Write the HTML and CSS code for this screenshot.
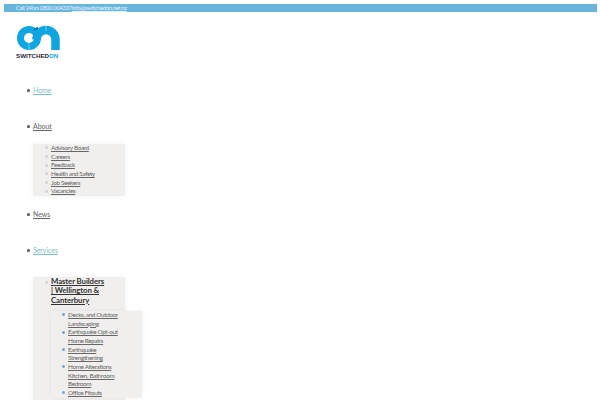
FILE: index.html
```html
<!DOCTYPE html>
<html lang="en">
<head>
<meta charset="utf-8">
<title>Switched On</title>
<link rel="stylesheet" href="styles.css">
</head>
<body>
<div class="topbar">Call 24hrs 0800 004337<a href="#">info@switchedon.net.nz</a></div>
<a class="logo" href="#">
<svg width="46" height="26" viewBox="0 0 46 26"><circle cx="13" cy="13" r="8.5" fill="none" stroke="#0ea5e0" stroke-width="7"/><path d="M20.5 14.5A9.5 9.5 0 0 1 39.5 14.5V25" fill="none" stroke="#0ea5e0" stroke-width="8.5"/><path d="M18 5L22 2.5" stroke="#0a6f9c" stroke-width="1.6"/><path d="M13 18.5V25M30 0V6" stroke="#bfe6f7" stroke-width=".6"/></svg>
<span class="logo-text">SWITCHED<span class="logo-on">ON</span></span>
</a>
<ul class="menu">
<li class="item"><a class="active" href="#">Home</a></li>
<li class="item has-panel"><a href="#">About</a>
<ul class="panel">
<li><a href="#">Advisory Board</a></li>
<li><a href="#">Careers</a></li>
<li><a href="#">Feedback</a></li>
<li><a href="#">Health and Safety</a></li>
<li><a href="#">Job Seekers</a></li>
<li><a href="#">Vacancies</a></li>
</ul></li>
<li class="item"><a href="#">News</a></li>
<li class="item has-panel"><a class="active" href="#">Services</a>
<ul class="panel panel-low">
<li class="group"><a class="group-title" href="#">Master Builders | Wellington &amp; Canterbury</a>
<ul class="panel nested">
<li><a href="#">Decks, and Outdoor Landscaping</a></li>
<li><a href="#">Earthquake Opt-out Home Repairs</a></li>
<li><a href="#">Earthquake Strengthening</a></li>
<li><a href="#">Home Alterations Kitchen, Bathroom Bedroom</a></li>
<li><a href="#">Office Fitouts</a></li>
</ul></li>
</ul></li>
</ul>
</body>
</html>
```
FILE: styles.css
```css
html, body { height: 100%; overflow: hidden; }
body { margin: 0; padding: 3.5px; box-sizing: border-box; background: #fff; font-family: Lato, sans-serif; font-size: 6.4px; line-height: 8.67px; color: #666; }
a { color: #666; }
ul { list-style: none; }
.topbar { background: #68b5e0; color: #e4f2fa; height: 8.5px; line-height: 8.5px; padding-left: 12.5px; font-size: 5.9px; letter-spacing: -.33px; }
.topbar a { color: #e4f2fa; }
.logo { display: flex; flex-direction: column; width: 46px; margin: 13px 0 0 12.5px; text-decoration: none; }
.logo svg { display: block; }
.logo-text { margin-top: 1px; font-family: "Liberation Sans", sans-serif; font-weight: 700; font-size: 6.2px; line-height: 8px; color: #1f2a33; white-space: nowrap; }
.logo-on { color: #0ea5e0; }
.menu { margin: 12px 0 0; padding: 0 0 0 29.5px; }
.item { padding: 13.5px 0; line-height: 9px; font-size: 7px; letter-spacing: -.05px; }
.item::before { content: ""; display: inline-block; width: 3px; height: 3px; margin: 0 3.5px 1px -6.5px; border-radius: 50%; background: #555; vertical-align: middle; }
.has-panel { padding-bottom: 0; }
.active { color: #78c2cc; }
.panel { width: 92px; box-sizing: border-box; margin: 13.5px 0 0; padding: 0 10px 0 18px; background: #f0efed; box-shadow: 0 0 6px rgba(0,0,0,.05); font-size: 6.4px; letter-spacing: -.36px; line-height: 8.67px; }
.panel > li::before { content: ""; display: inline-block; width: 3px; height: 3px; margin: 0 3.3px 1px -6.3px; border-radius: 50%; background: #cfd3d6; vertical-align: middle; }
.panel-low { margin-top: 22.5px; padding: 0 18px 12px 18px; }
.panel-low > .group::before { position: absolute; margin-top: 3.5px; }
.group-title { display: block; font-weight: 700; font-size: 7.8px; letter-spacing: -.1px; line-height: 9.3px; color: #333; }
.nested { width: 91px; margin: 6px 0 0; padding: 0 18px 0 17px; }
.nested > li::before { background: #6fa8dc; }
```
